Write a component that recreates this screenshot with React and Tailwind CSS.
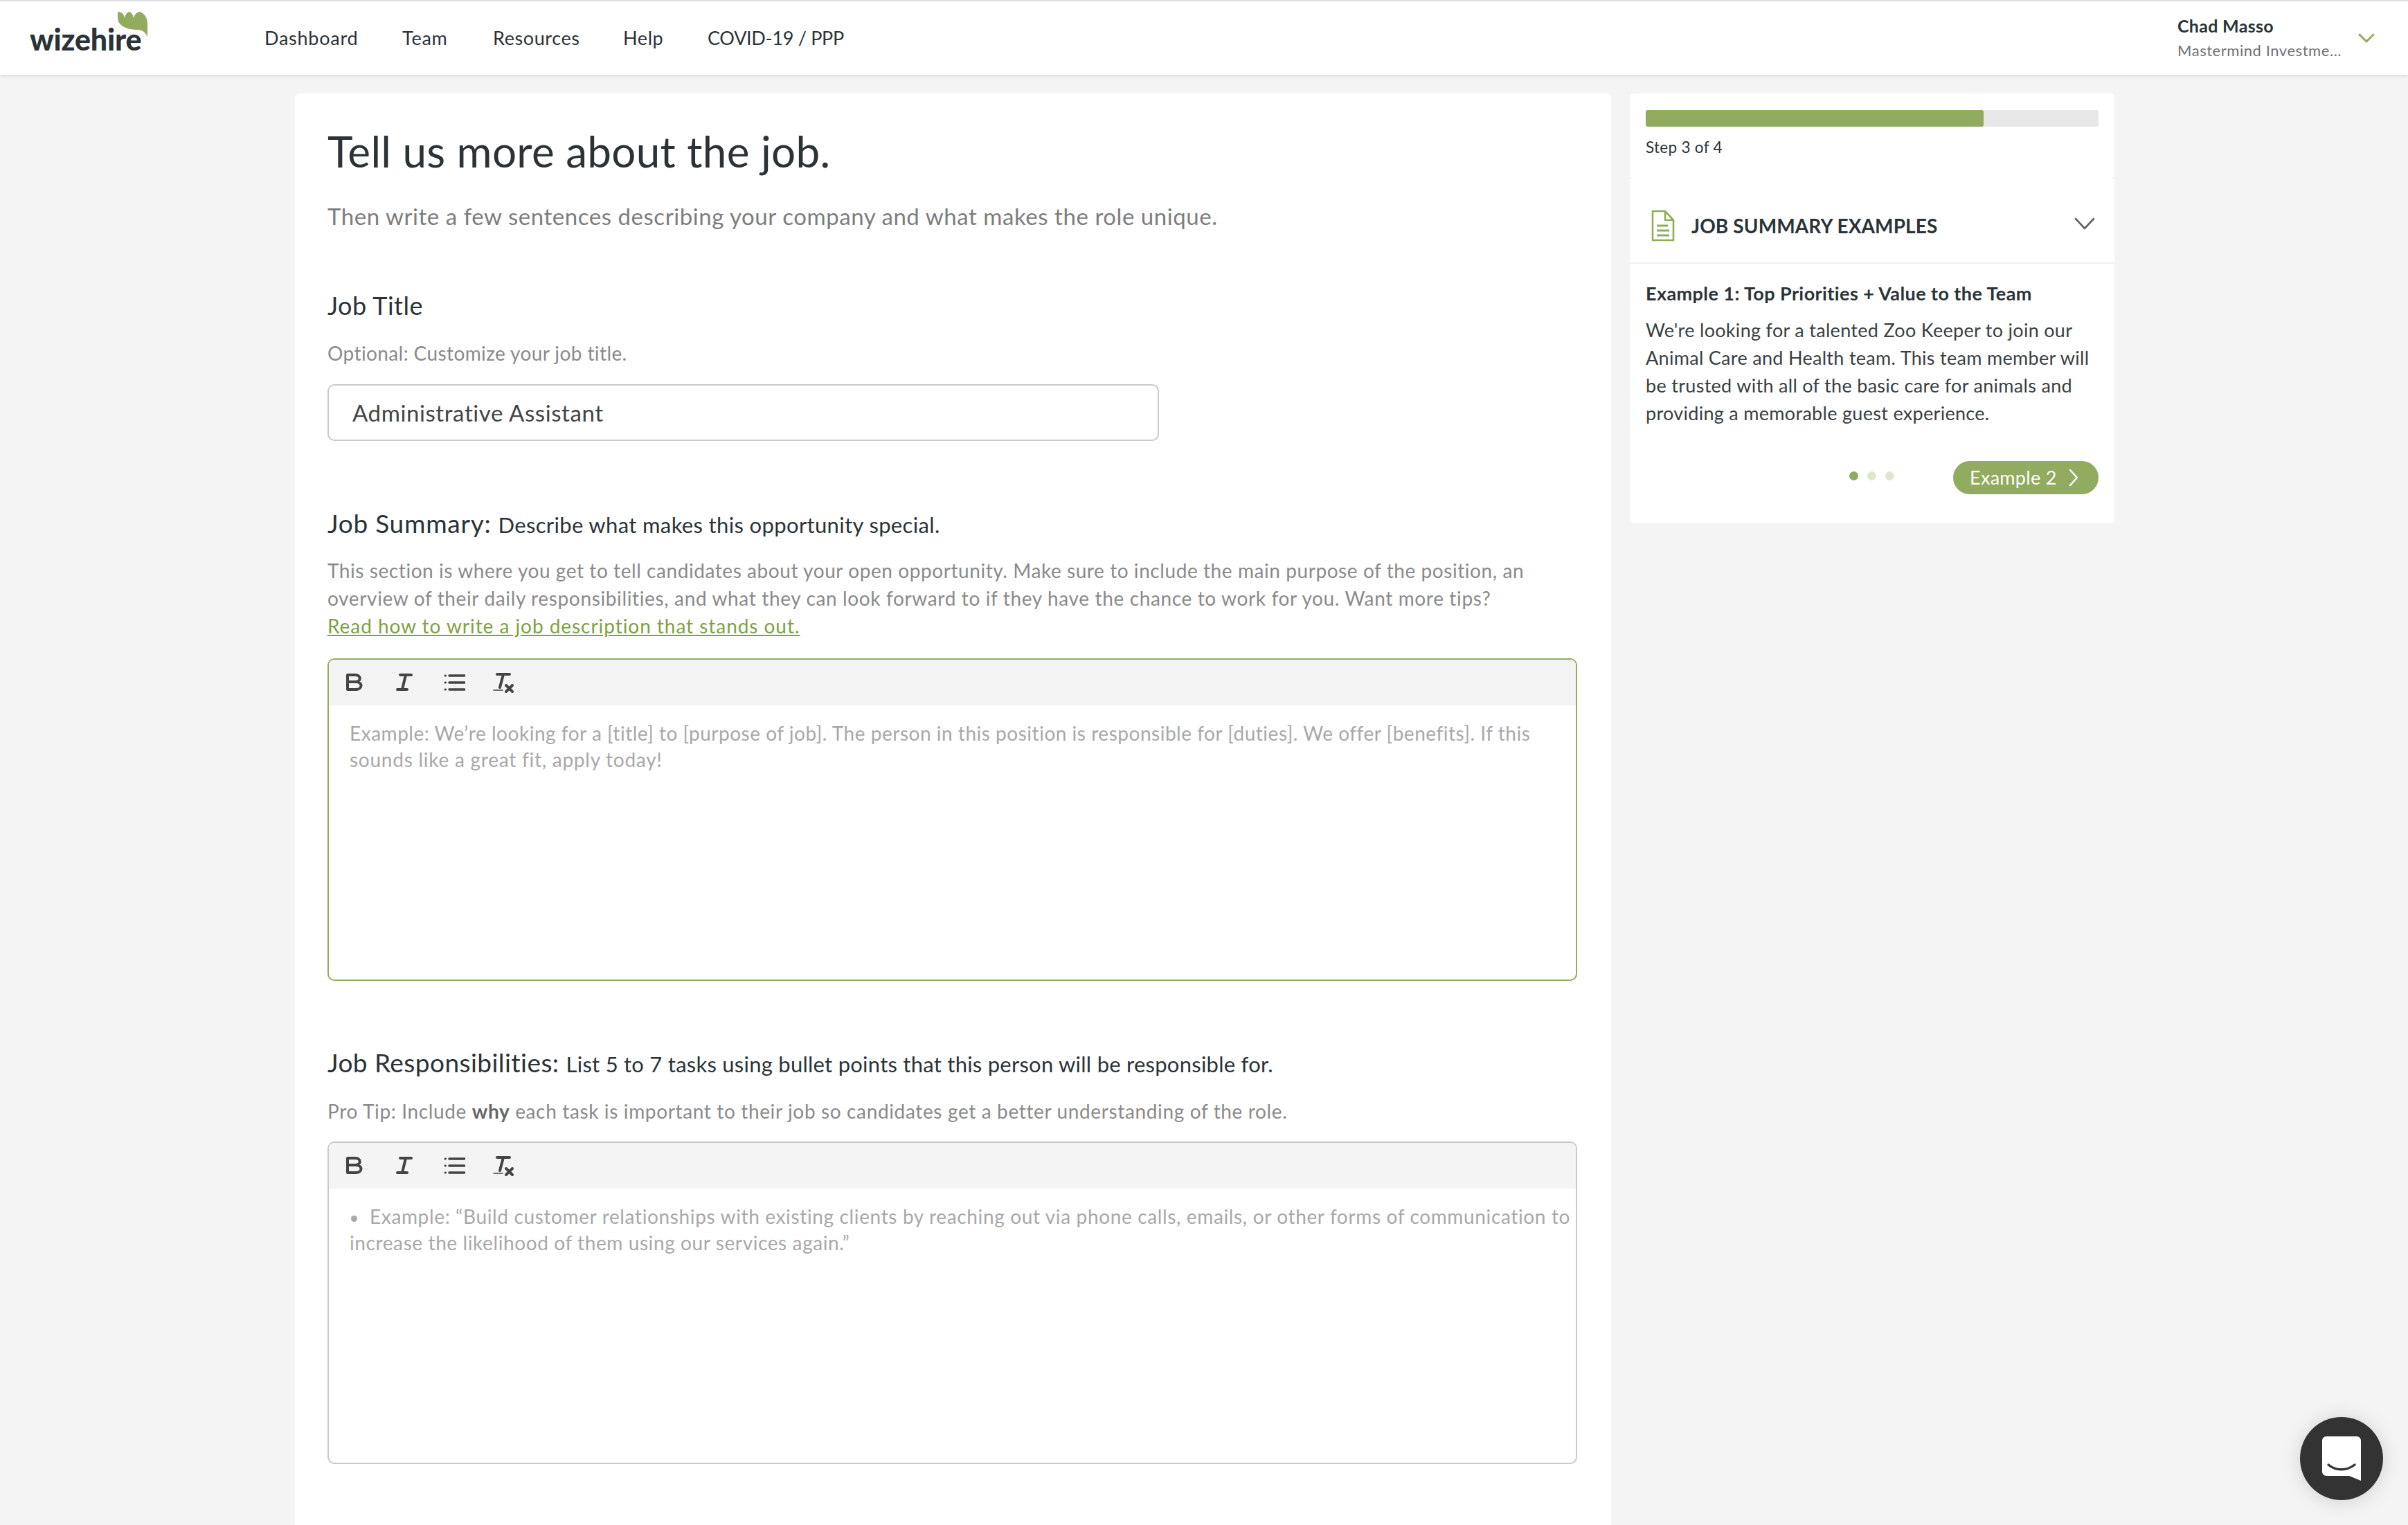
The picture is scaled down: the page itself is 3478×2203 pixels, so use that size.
const font = { fontFamily: '"Lato", "Open Sans", sans-serif' };

function LogoLeaf() {
  return (
    <svg width="44" height="36" viewBox="0 0 44 36" className="absolute left-[170px] top-[15px]">
      <path d="M0 0 C5 0 9 3 10 9 C11 4 13 1 17 0 C20 1 22 4 23 9 C24 4 27 1 32 0 C40 3 43 10 43 18 L43 36 C40 30 37 27 30 26 C12 26 0 20 0 8 Z" fill="#91ab5f" />
    </svg>
  );
}

function Nav() {
  const links = [
    ["Dashboard", "w-[199px] tracking-[0.75px]"],
    ["Team", "w-[131px] tracking-[0.75px]"],
    ["Resources", "w-[188px]"],
    ["Help", "w-[122px]"],
    ["COVID-19 / PPP", "w-[200px] tracking-[-0.3px]"],
  ];
  return (
    <header className="flex h-[108px] items-center border-t-2 border-[#dfdfe3] bg-white shadow-[0_2px_5px_rgba(0,0,0,0.1)] relative z-10">
      <div className="relative h-full w-[382px] shrink-0">
        <span className="absolute left-[43px] top-[27px] text-[43px] font-black leading-[56px] tracking-[-0.2px] text-[#2b3337]">wizehire</span>
        <LogoLeaf />
      </div>
      <nav className="flex text-[27px] tracking-[0.6px] text-[#2b3337]">
        {links.map(([label, w]) => (
          <a key={label} className={w + " whitespace-nowrap"}>{label}</a>
        ))}
      </nav>
      <div className="ml-auto flex items-center pr-[48px]">
        <div className="w-[261px]">
          <div className="text-[25px] font-bold leading-[36px] tracking-[0.3px] text-[#2b3337]">Chad Masso</div>
          <div className="whitespace-nowrap text-[22px] leading-[36px] tracking-[0.55px] text-[#727272]">Mastermind Investme...</div>
        </div>
        <svg width="24" height="16" viewBox="0 0 24 16" fill="none" stroke="#8fae55" strokeWidth="3" strokeLinecap="round" strokeLinejoin="round">
          <path d="M2 3 L12 13 L22 3" />
        </svg>
      </div>
    </header>
  );
}

function ToolbarIcons() {
  return (
    <div className="flex h-[66px] items-center gap-[40px] rounded-t-[8px] bg-[#f4f4f4] pl-[21px] text-[#444]">
      <svg width="32" height="32" viewBox="0 0 32 32" fill="none" stroke="#444" strokeWidth="4" strokeLinejoin="round" strokeLinecap="round">
        <path d="M6 5 H17 C26 5 26 15 17 15 H6 Z M6 15 H18 C28 15 28 26 18 26 H6 Z" />
      </svg>
      <svg width="32" height="32" viewBox="0 0 32 32" fill="none" stroke="#444" strokeWidth="4" strokeLinecap="round">
        <path d="M10 5 H26 M6 26 H20 M18 5 L13 26" />
      </svg>
      <svg width="32" height="32" viewBox="0 0 32 32" fill="none" stroke="#444" strokeWidth="3.6" strokeLinecap="round">
        <path d="M9 6 H31 M9 16 H31 M9 26 H31" />
        <path d="M3 6 H3.5 M3 16 H3.5 M3 26 H3.5" strokeWidth="3" />
      </svg>
      <svg width="32" height="32" viewBox="0 0 32 32" fill="none" stroke="#444" strokeLinecap="round">
        <path d="M6 4 H24 M15 4 L10 23" strokeWidth="4" />
        <path d="M1 27 H14" strokeWidth="1.6" />
        <path d="M19 20 L28 29 M28 20 L19 29" strokeWidth="4" />
      </svg>
    </div>
  );
}

function Editor({ focused, children }) {
  return (
    <div className={"h-[466px] rounded-[10px] border-2 " + (focused ? "border-[#91ab5f]" : "border-[#c9c9c9]")}>
      <ToolbarIcons />
      <div className="whitespace-nowrap pl-[30px] pt-[21px] text-[28px] leading-[38px] tracking-[0.52px] text-[#a8a8a8]">
        {children}
      </div>
    </div>
  );
}

function MainCard() {
  return (
    <section className="h-[2068px] w-[1901px] shrink-0 rounded-t-[6px] bg-white pl-[47px] pr-[47px] pt-[46px]">
      <h1 className="text-[62px] leading-[74px] tracking-[0.3px] text-[#2b3337]">Tell us more about the job.</h1>
      <p className="mt-[35px] text-[33px] leading-[44px] tracking-[0.55px] text-[#7d7d7d]">
        Then write a few sentences describing your company and what makes the role unique.
      </p>

      <h2 className="mt-[84px] text-[36px] leading-[46px] tracking-[0.5px] text-[#2b3337]">Job Title</h2>
      <p className="mt-[28px] text-[28px] leading-[36px] tracking-[0.4px] text-[#8a8a8a]">Optional: Customize your job title.</p>
      <div className="mt-[27px] flex h-[82px] w-[1201px] items-center rounded-[10px] border-2 border-[#c9c9c9] pl-[34px] text-[33px] tracking-[0.6px] text-[#444]">
        <span className="mt-[1px]">Administrative Assistant</span>
      </div>

      <h2 className="mt-[96px] leading-[46px] text-[#2b3337]">
        <span className="text-[37px] tracking-[0.75px]">Job Summary:</span>
        <span className="ml-[10px] text-[31px] tracking-[0.35px]">Describe what makes this opportunity special.</span>
      </h2>
      <div className="mt-[17px] w-[1810px] whitespace-nowrap text-[28px] leading-[40px] tracking-[0.57px] text-[#8a8a8a]">
        <p>This section is where you get to tell candidates about your open opportunity. Make sure to include the main purpose of the position, an</p>
        <p className="tracking-[0.64px]">overview of their daily responsibilities, and what they can look forward to if they have the chance to work for you. Want more tips?</p>
        <a className="tracking-[0.95px] text-[#7ea23f] underline">Read how to write a job description that stands out.</a>
      </div>
      <div className="mt-[27px] w-[1805px]">
        <Editor focused>
          <p>Example: We’re looking for a [title] to [purpose of job]. The person in this position is responsible for [duties]. We offer [benefits]. If this</p>
          <p className="tracking-[0.75px]">sounds like a great fit, apply today!</p>
        </Editor>
      </div>

      <h2 className="mt-[95px] leading-[46px] text-[#2b3337]">
        <span className="text-[37px] tracking-[0.45px]">Job Responsibilities:</span>
        <span className="ml-[10px] text-[31px] tracking-[0.25px]">List 5 to 7 tasks using bullet points that this person will be responsible for.</span>
      </h2>
      <p className="mt-[19px] text-[28px] leading-[40px] tracking-[0.64px] text-[#8a8a8a]">
        Pro Tip: Include <b className="font-bold text-[#666]">why</b> each task is important to their job so candidates get a better understanding of the role.
      </p>
      <div className="mt-[24px] w-[1805px]">
        <Editor>
          <p className="tracking-[0.64px]"><span className="mr-[18px] ml-[2px] inline-block h-[9px] w-[9px] rounded-full bg-[#a8a8a8] align-middle" />Example: “Build customer relationships with existing clients by reaching out via phone calls, emails, or other forms of communication to</p>
          <p className="tracking-[0.6px]">increase the likelihood of them using our services again.”</p>
        </Editor>
      </div>
    </section>
  );
}

function Sidebar() {
  return (
    <aside className="w-[700px] shrink-0 text-[#2b3337]">
      <div className="h-[121px] rounded-t-[6px] bg-white px-[23px] pt-[24px]">
        <div className="h-[24px] rounded-[3px] bg-[#e8e7e8]">
          <div className="h-full w-[488px] rounded-[3px] bg-[#91ab5f]" />
        </div>
        <p className="mt-[15px] text-[22.5px] leading-[30px] tracking-[0.3px]">Step 3 of 4</p>
      </div>
      <div className="h-[500px] rounded-[6px] bg-white">
        <div className="flex h-[125px] items-center border-b-2 border-[#f0f0f0] pb-[2px] pl-[31px] pr-[28px] pt-[18px]">
          <svg width="34" height="46" viewBox="0 0 34 46" fill="none" stroke="#8fae55" strokeWidth="2.6" strokeLinejoin="round">
            <path d="M2 2 H20 L32 15 V44 H2 Z M20 2 V15 H32" />
            <path d="M8 23 H24 M8 30 H26 M8 37 H26" strokeWidth="3" />
          </svg>
          <span className="ml-[24px] text-[28px] font-bold tracking-[0.1px]">JOB SUMMARY EXAMPLES</span>
          <svg className="ml-auto -mt-[6px]" width="30" height="18" viewBox="0 0 30 18" fill="none" stroke="#5f6468" strokeWidth="2.6" strokeLinecap="round" strokeLinejoin="round">
            <path d="M2 2 L15 16 L28 2" />
          </svg>
        </div>
        <div className="px-[23px] pt-[24px]">
          <h3 className="text-[27px] font-bold leading-[38px] tracking-[0.42px]">Example 1: Top Priorities + Value to the Team</h3>
          <div className="mt-[14px] text-[27px] leading-[40px] tracking-[0.3px] text-[#3a3f42]">
            <p>We're looking for a talented Zoo Keeper to join our</p>
            <p>Animal Care and Health team. This team member will</p>
            <p>be trusted with all of the basic care for animals and</p>
            <p>providing a memorable guest experience.</p>
          </div>
          <div className="mt-[49px] flex items-center justify-end">
            <div className="-mt-[6px] mr-[85px] flex gap-[13px]">
              <span className="h-[13px] w-[13px] rounded-full bg-[#91ab5f]" />
              <span className="h-[13px] w-[13px] rounded-full bg-[#dde8cf]" />
              <span className="h-[13px] w-[13px] rounded-full bg-[#dde8cf]" />
            </div>
            <button className="flex h-[48px] w-[210px] items-center rounded-full bg-[#91ab5f] pl-[24px] text-[27px] tracking-[0.3px] text-white">
              Example 2
              <svg className="ml-[17px]" width="14" height="26" viewBox="0 0 14 26" fill="none" stroke="#fff" strokeWidth="2.4" strokeLinecap="round" strokeLinejoin="round">
                <path d="M2 2 L12 13 L2 24" />
              </svg>
            </button>
          </div>
        </div>
      </div>
    </aside>
  );
}

function ChatBubble() {
  return (
    <div className="fixed bottom-[36px] right-[36px] z-20 flex h-[120px] w-[120px] items-center justify-center rounded-full bg-[#333] shadow-[0_2px_30px_rgba(0,0,0,0.14)]">
      <svg width="56" height="64" viewBox="0 0 56 64">
        <path d="M6 0 H50 A6 6 0 0 1 56 6 V64 L39 57 H6 A6 6 0 0 1 0 51 V6 A6 6 0 0 1 6 0 Z" fill="#fff" />
        <path d="M9 41 C20 50 35 50 47 41" fill="none" stroke="#333" strokeWidth="3.4" strokeLinecap="round" />
      </svg>
    </div>
  );
}

export default function App() {
  return (
    <div className="h-[2203px] overflow-hidden bg-[#f4f4f4]" style={font}>
      <Nav />
      <main className="flex gap-[27px] pl-[426px] pt-[27px]">
        <MainCard />
        <Sidebar />
      </main>
      <ChatBubble />
    </div>
  );
}
